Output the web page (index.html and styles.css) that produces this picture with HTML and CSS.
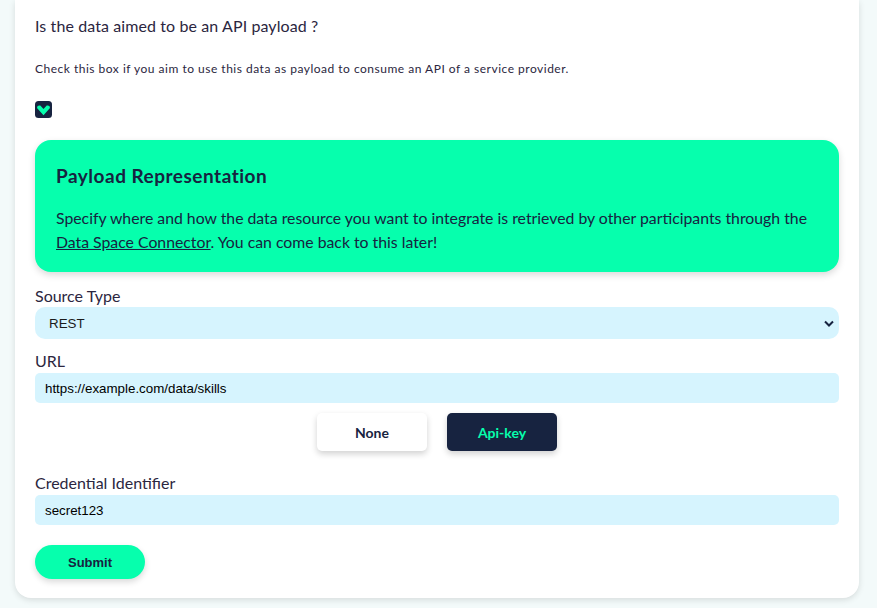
FILE: index.html
```html
<!DOCTYPE html>
<html>
<head>
<meta charset="utf-8">
<link rel="stylesheet" href="styles.css">
</head>
<body>
<div class="page">
  <div class="card">
    <h3 class="question">Is the data aimed to be an API payload ?</h3>
    <p class="hint">Check this box if you aim to use this data as payload to consume an API of a service provider.</p>
    <div class="check">
      <svg width="17" height="17" viewBox="0 0 17 17"><rect x="0" y="0" width="17" height="17" rx="3.5" fill="#172340"/><path d="M2 7 Q2 4.6 4.3 4.6 L5.3 4.6 L8.5 8 L11.7 4.6 L12.7 4.6 Q15 4.6 15 7 L8.5 14.2 Z" fill="#06ffad"/></svg>
    </div>
    <div class="info">
      <h2 class="info-title">Payload Representation</h2>
      <p class="info-text">Specify where and how the data resource you want to integrate is retrieved by other participants through the <a href="#">Data Space Connector</a>. You can come back to this later!</p>
    </div>
    <label class="label">Source Type</label>
    <div class="select">
      <span>REST</span>
      <svg width="10" height="7" viewBox="0 0 10 7"><path d="M1 1.5 L5 5.5 L9 1.5" fill="none" stroke="#172340" stroke-width="2"/></svg>
    </div>
    <label class="label label-url">URL</label>
    <div class="input">https://example.com/data/skills</div>
    <div class="toggles">
      <button class="tog tog-light">None</button>
      <button class="tog tog-dark">Api-key</button>
    </div>
    <label class="label label-cred">Credential Identifier</label>
    <div class="input">secret123</div>
    <button class="submit">Submit</button>
  </div>
</div>
</body>
</html>
```
FILE: styles.css
```css
* { box-sizing: border-box; }
html, body { margin: 0; padding: 0; }
body {
  background: #f3fafa;
  font-family: "Lato", "Liberation Sans", sans-serif;
  color: #2b2640;
  overflow: hidden;
  height: 608px;
}
.page {
  padding: 0 18px 10px 15px;
}
.card {
  background: #fff;
  border-radius: 0 0 16px 16px;
  box-shadow: 0 2px 6px rgba(0,0,0,0.12);
  padding: 16px 20px 19px 20px;
  display: flex;
  flex-direction: column;
}
.question {
  margin: 0;
  font-size: 16px;
  font-weight: 400;
  line-height: 20px;
  letter-spacing: 0.1px;
}
.hint {
  margin: 26px 0 0 0;
  font-size: 12px;
  line-height: 14px;
  letter-spacing: 0.5px;
}
.check {
  margin-top: 25px;
  height: 17px;
  display: flex;
}
.info {
  margin-top: 22px;
  background: #06ffad;
  border-radius: 16px;
  box-shadow: 0 3px 7px rgba(0,0,0,0.15);
  padding: 24px 21px 18px 21px;
}
.info-title {
  margin: 0;
  font-size: 19px;
  font-weight: 700;
  line-height: 24px;
  letter-spacing: 0.5px;
  color: #172340;
}
.info-text {
  margin: 18px 0 0 0;
  font-size: 15.8px;
  line-height: 24px;
  color: #172340;
}
.info-text a { color: #172340; text-decoration: underline; }
.label {
  margin-top: 14px;
  font-size: 16px;
  line-height: 20px;
  display: block;
}
.select {
  margin-top: 1px;
  height: 32px;
  background: #d6f4fe;
  border-radius: 10px;
  display: flex;
  align-items: center;
  justify-content: space-between;
  padding: 0 5px 0 14px;
  font-family: "Liberation Sans", sans-serif;
  font-size: 13.33px;
  color: #1b1b1b;
}
.label-url { margin-top: 12px; }
.input {
  margin-top: 2px;
  height: 30px;
  background: #d6f4fe;
  border-radius: 5px;
  display: flex;
  align-items: center;
  padding: 0 10px;
  font-family: "Liberation Sans", sans-serif;
  font-size: 13.33px;
  color: #000;
}
.toggles {
  margin-top: 10px;
  display: flex;
  justify-content: center;
  gap: 20px;
}
.tog {
  width: 110px;
  height: 38px;
  border: none;
  border-radius: 5px;
  font-family: "Lato", "Liberation Sans", sans-serif;
  font-weight: 700;
  font-size: 14px;
}
.tog-light {
  background: #fff;
  color: #172340;
  box-shadow: 0 3px 6px rgba(0,0,0,0.18);
}
.tog-dark {
  background: #172340;
  color: #06ffad;
  box-shadow: 0 3px 6px rgba(0,0,0,0.18);
}
.label-cred { margin-top: 22px; }
.submit {
  margin-top: 20px;
  width: 110px;
  height: 34px;
  border: none;
  border-radius: 17px;
  background: #06ffad;
  color: #172340;
  font-family: "Liberation Sans", sans-serif;
  font-weight: 700;
  font-size: 13px;
  box-shadow: 0 3px 6px rgba(0,0,0,0.15);
}
```
